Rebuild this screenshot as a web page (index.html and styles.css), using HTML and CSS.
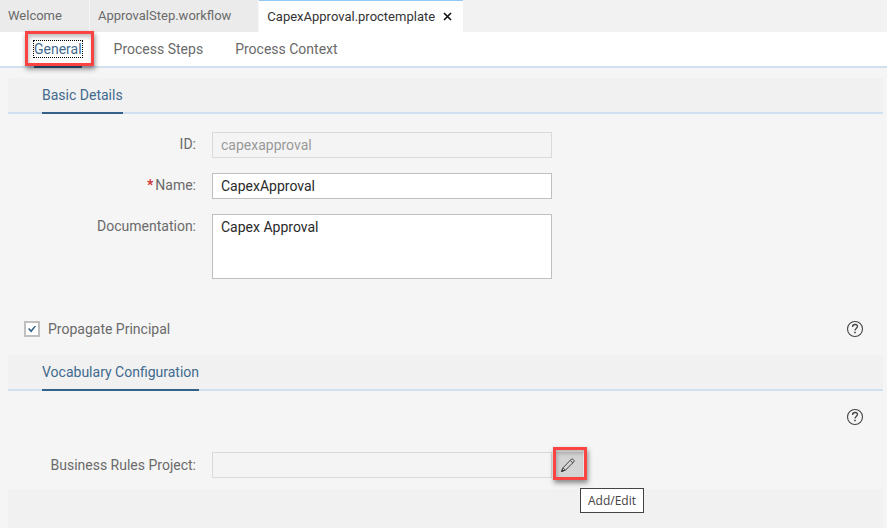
FILE: index.html
```html
<!DOCTYPE html>
<html lang="en">
<head>
<meta charset="utf-8">
<meta name="viewport" content="width=device-width, initial-scale=1">
<title>CapexApproval.proctemplate</title>
<link rel="stylesheet" href="styles.css">
</head>
<body>
<nav class="editor-tabs" aria-label="Open editors">
  <button type="button" class="editor-tab">Welcome</button>
  <button type="button" class="editor-tab">ApprovalStep.workflow</button>
  <div class="editor-tab-active">
    <button type="button" class="tab-title">CapexApproval.proctemplate</button>
    <button type="button" class="tab-close" aria-label="Close">
      <svg width="9" height="9" viewBox="0 0 9 9"><path d="M1 1l7 7M8 1L1 8" fill="none" stroke="#111" stroke-width="1.6"/></svg>
    </button>
  </div>
</nav>
<nav class="page-tabs" aria-label="Template pages">
  <a href="#general" class="page-tab selected"><span class="focus-text">General</span><span class="marker marker-tab"></span></a>
  <a href="#steps" class="page-tab">Process Steps</a>
  <a href="#context" class="page-tab">Process Context</a>
</nav>
<main id="general">
  <section>
    <header class="section-head"><h2>Basic Details</h2></header>
    <div class="form">
      <label for="id">ID:</label>
      <input id="id" type="text" value="capexapproval" disabled>
      <label for="name"><span class="required">*</span>Name:</label>
      <input id="name" type="text" value="CapexApproval">
      <label for="doc">Documentation:</label>
      <textarea id="doc" spellcheck="false">Capex Approval</textarea>
    </div>
    <div class="option-row">
      <label class="option"><input type="checkbox" checked>Propagate Principal</label>
      <button type="button" class="help" aria-label="Help">
        <svg width="18" height="18" viewBox="0 0 18 18"><circle cx="9" cy="9" r="7.5" fill="none" stroke="#444" stroke-width="1.1"/><path d="M6.5 6.9C6.5 5.3 7.5 4.5 9 4.5s2.5.8 2.5 2.1c0 1.5-2.5 1.9-2.5 3.9" fill="none" stroke="#444" stroke-width="1.3"/><path d="M8.2 11.8h1.6v1.5H8.2z" fill="#444"/></svg>
      </button>
    </div>
  </section>
  <section>
    <header class="section-head"><h2>Vocabulary Configuration</h2></header>
    <div class="help-row">
      <button type="button" class="help" aria-label="Help">
        <svg width="18" height="18" viewBox="0 0 18 18"><circle cx="9" cy="9" r="7.5" fill="none" stroke="#444" stroke-width="1.1"/><path d="M6.5 6.9C6.5 5.3 7.5 4.5 9 4.5s2.5.8 2.5 2.1c0 1.5-2.5 1.9-2.5 3.9" fill="none" stroke="#444" stroke-width="1.3"/><path d="M8.2 11.8h1.6v1.5H8.2z" fill="#444"/></svg>
      </button>
    </div>
    <div class="form form-rules">
      <label for="rules">Business Rules Project:</label>
      <input id="rules" type="text" disabled>
      <div class="edit-wrap">
        <button type="button" class="edit" aria-label="Add/Edit" aria-describedby="tip">
          <svg width="16" height="16" viewBox="0 0 16 16"><path d="M1.5 14.5L3 10.8 11.3 2.2q.8-.8 1.6 0l1 1q.8.8 0 1.6L5.4 13.2zM3 10.8l2.4 2.4M10.2 3.3l2.6 2.6" fill="none" stroke="#444" stroke-width="1"/><path d="M1 15l1.1-3.2 2.1 2.1z" fill="#333"/></svg>
        </button>
        <span class="marker marker-edit"></span>
        <span class="tooltip" id="tip" role="tooltip">Add/Edit</span>
      </div>
    </div>
  </section>
  <section class="next-section"></section>
</main>
</body>
</html>
```

FILE: styles.css
```css
* { box-sizing: border-box; }

html, body { height: 100%; }

body {
  margin: 0;
  display: flex;
  flex-direction: column;
  overflow: hidden;
  background: #f5f5f5;
  color: #6a6a6a;
  font: 14px/20px Roboto, "Liberation Sans", sans-serif;
}

button {
  margin: 0;
  padding: 0;
  border: 0;
  background: none;
  color: inherit;
  font: inherit;
}

svg { display: block; }

.editor-tabs {
  display: flex;
  flex: none;
  height: 32px;
  background: #f2f2f2;
  font-size: 13px;
}

.editor-tab {
  padding: 0 27px 0 8px;
  background: #ebebeb;
  border-right: 1px solid #f5f5f5;
}

.editor-tab-active {
  display: flex;
  align-items: center;
  gap: 8px;
  padding: 0 11px 0 8px;
  border-top: 1px solid #91c8f6;
  background: #fff;
  color: #333;
}

.page-tabs {
  display: flex;
  flex: none;
  gap: 32px;
  height: 36px;
  padding: 0 34px;
  border-bottom: 2px solid #d1e0ee;
  background: #fff;
}

.page-tab {
  position: relative;
  padding-top: 7px;
  height: 36px;
  color: #6a6a6a;
  text-decoration: none;
}

.selected {
  border-bottom: 2px solid #346187;
  color: #3f6a8e;
}

.focus-text {
  display: block;
  line-height: 16px;
  margin-top: 2px;
  outline: 1px dotted #000;
}

.marker {
  position: absolute;
  border: 3px solid #fa4343;
  box-shadow: 1px 3px 5px rgba(0, 0, 0, .45), inset 1px 3px 4px rgba(0, 0, 0, .25);
  pointer-events: none;
}

.marker-tab { inset: -1px -12px 0 -9px; }

main {
  display: flex;
  flex: 1;
  flex-direction: column;
  padding: 10px 4px 0 8px;
}

.section-head {
  height: 36px;
  padding-left: 34px;
  border-bottom: 2px solid #d1e0ee;
  background: #f1f1f1;
}

h2 {
  display: inline-block;
  height: 36px;
  margin: 0;
  padding-top: 7px;
  border-bottom: 2px solid #346187;
  color: #3f6a8e;
  font: inherit;
}

.form {
  display: grid;
  grid-template-columns: 188px minmax(0, 340px) auto;
  column-gap: 16px;
  row-gap: 15px;
  padding-top: 18px;
}

.form > label {
  grid-column: 1;
  padding-top: 2px;
  text-align: right;
}

.required {
  margin-right: 2px;
  color: #c33;
  font-weight: bold;
}

input[type="text"], textarea {
  display: block;
  width: 100%;
  height: 26px;
  margin: 0;
  padding: 0 8px;
  border: 1px solid #bfbfbf;
  border-radius: 0;
  background: #fff;
  color: #2a2a2a;
  font: inherit;
}

textarea {
  height: 65px;
  padding-top: 2px;
  resize: none;
}

input[type="text"]:disabled {
  border-color: #dadada;
  background: #f4f4f4;
  color: #999;
}

.option-row {
  display: flex;
  align-items: center;
  justify-content: space-between;
  margin: 40px 19px 16px 16px;
}

.option {
  display: flex;
  align-items: center;
  gap: 8px;
}

.option input {
  display: grid;
  place-items: center;
  width: 16px;
  height: 16px;
  margin: 0;
  border: 2px solid #bfbfbf;
  appearance: none;
  background: #fff;
}

.option input:checked::before {
  content: "";
  width: 8px;
  height: 7px;
  background: #346187;
  clip-path: polygon(0 50%, 16% 36%, 38% 66%, 86% 0, 100% 12%, 40% 100%);
}

.help-row {
  display: flex;
  justify-content: flex-end;
  padding: 17px 19px 8px;
}

.form-rules {
  grid-template-columns: 200px minmax(0, 340px) auto;
  column-gap: 4px;
}

.form-rules > label { padding: 3px 12px 0 0; }

.edit-wrap {
  position: relative;
  width: 27px;
}

.edit {
  display: grid;
  place-items: center;
  width: 27px;
  height: 26px;
  padding-right: 3px;
  background: #d4d4d4;
}

.marker-edit { inset: -5px -4px -2px -3px; }

.tooltip {
  position: absolute;
  top: 36px;
  left: 24px;
  padding: 2px 7px 1px;
  border: 1px solid #444;
  background: #fff;
  color: #444;
  font-family: "Open Sans", sans-serif;
  font-size: 12px;
}

.next-section {
  flex: 1;
  margin-top: 11px;
  background: #f1f1f1;
}
```
